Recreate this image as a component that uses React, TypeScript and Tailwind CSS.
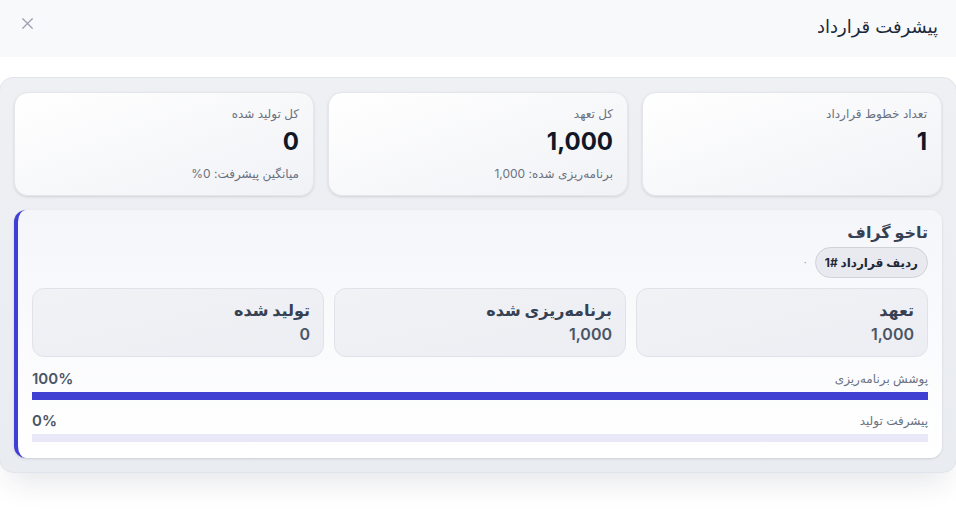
import { X } from 'lucide-react';

interface Stat {
  label: string;
  value: string;
  sub?: string;
}

const stats: Stat[] = [
  { label: 'تعداد خطوط قرارداد', value: '1' },
  { label: 'کل تعهد', value: '1,000', sub: 'برنامه‌ریزی شده: 1,000' },
  { label: 'کل تولید شده', value: '0', sub: 'میانگین پیشرفت: 0%' },
];

const lineStats = [
  { label: 'تعهد', value: '1,000' },
  { label: 'برنامه‌ریزی شده', value: '1,000' },
  { label: 'تولید شده', value: '0' },
];

function ProgressRow({ label, percent, fill }: { label: string; percent: number; fill: boolean }) {
  return (
    <div>
      <div className="flex items-center justify-between leading-5">
        <span className="text-[12px] text-gray-500">{label}</span>
        <span className="text-[15px] font-semibold text-gray-600">{percent}%</span>
      </div>
      <div className="mt-[3px] h-2 w-full bg-[#e8e8f8]">
        {fill && <div className="h-full bg-[#4040d2]" style={{ width: `${percent}%` }} />}
      </div>
    </div>
  );
}

export default function App() {
  return (
    <div dir="rtl" className="min-h-[526px] overflow-hidden bg-white text-gray-900" style={{ fontFamily: 'Inter, "DejaVu Sans", sans-serif' }}>
      {/* Header */}
      <div className="flex h-[57px] items-start justify-between bg-[#f8f9fb] px-[18px]">
        <h2 className="pt-[15px] text-[18px] font-normal leading-6 text-gray-800">پیشرفت قرارداد</h2>
        <X size={19} strokeWidth={1.5} className="mt-[14px] text-gray-400" />
      </div>

      <div className="pt-5">
        <div className="-mx-px rounded-[14px] border border-[#e1e4ea] bg-gradient-to-b from-[#eef0f4] to-[#e9ecf1] px-[14px] pb-[14px] pt-[14px] shadow-[0_18px_30px_-10px_rgba(30,40,70,0.12)]">
          {/* Top stats */}
          <div className="grid grid-cols-3 gap-[14px]">
            {stats.map((s) => (
              <div
                key={s.label}
                className="h-[104px] rounded-[14px] border border-[#e4e6eb] bg-gradient-to-br from-white to-[#f1f2f6] px-[14px] pt-[13px] shadow-sm"
              >
                <div className="text-[12px] leading-4 text-gray-500">{s.label}</div>
                <div className="mt-1 text-[24px] font-bold leading-8 text-gray-900">{s.value}</div>
                {s.sub && <div className="mt-2 text-[12px] leading-4 text-gray-500">{s.sub}</div>}
              </div>
            ))}
          </div>

          {/* Contract line card */}
          <div className="mt-[14px] rounded-[12px] border-l-4 border-[#3f3fd4] bg-gradient-to-b from-[#f5f6fa] to-white pb-[16px] pl-[14px] pr-[14px] pt-[10px] shadow-sm">
            <div className="text-[16px] font-bold leading-6 text-gray-700">تاخو گراف</div>
            <div className="mt-[3px] flex items-center gap-2">
              <span className="flex h-[31px] items-center rounded-full border border-[#cfd2d9] bg-[#e9eaef] px-[9px] text-[12px] font-bold leading-4 text-gray-800">
                ردیف قرارداد #1
              </span>
              <span className="text-[10px] text-gray-400">·</span>
            </div>

            <div className="mt-[10px] grid grid-cols-3 gap-[10px]">
              {lineStats.map((s) => (
                <div
                  key={s.label}
                  className="h-[69px] rounded-[12px] border border-[#dfe2e8] bg-gradient-to-br from-[#f1f2f6] to-[#eceef3] px-[13px] pt-[9px]"
                >
                  <div className="text-[16px] font-bold leading-6 text-gray-700">{s.label}</div>
                  <div className="text-[16px] font-semibold leading-6 text-gray-600">{s.value}</div>
                </div>
              ))}
            </div>

            <div className="mt-[12px]">
              <ProgressRow label="پوشش برنامه‌ریزی" percent={100} fill />
            </div>
            <div className="mt-[11px]">
              <ProgressRow label="پیشرفت تولید" percent={0} fill={false} />
            </div>
          </div>
        </div>
      </div>
    </div>
  );
}
